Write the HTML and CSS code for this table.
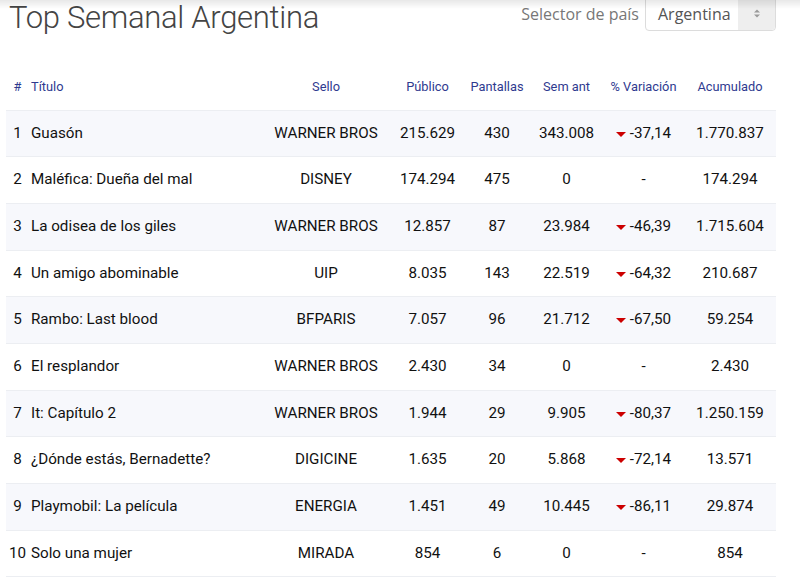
FILE: index.html
```html
<!DOCTYPE html>
<html lang="es">
<head>
<meta charset="utf-8">
<title>Top Semanal Argentina</title>
<link rel="stylesheet" href="styles.css">
</head>
<body>
<div class="topshadow"></div>
<div class="page">
  <div class="head">
    <h1 class="title">Top Semanal Argentina</h1>
    <div class="selector">
      <span class="sel-label">Selector de país</span>
      <div class="sel-box">
        <span class="sel-value">Argentina</span>
        <span class="sel-btn">
          <svg width="8" height="11" viewBox="0 0 8 11"><path d="M1 4.5 L4 1.5 L7 4.5 Z M1 6.5 L4 9.5 L7 6.5 Z" fill="#9a9a9a"/></svg>
        </span>
      </div>
    </div>
  </div>
  <table class="top">
    <colgroup>
      <col class="c-n"><col class="c-t"><col class="c-s"><col class="c-p"><col class="c-pa"><col class="c-sa"><col class="c-v"><col class="c-a">
    </colgroup>
    <thead>
      <tr><th>#</th><th class="l">Título</th><th>Sello</th><th>Público</th><th>Pantallas</th><th>Sem ant</th><th>% Variación</th><th>Acumulado</th></tr>
    </thead>
    <tbody>
      <tr><td>1</td><td class="l">Guasón</td><td>WARNER BROS</td><td>215.629</td><td>430</td><td>343.008</td><td><span class="down"></span>-37,14</td><td>1.770.837</td></tr>
      <tr><td>2</td><td class="l">Maléfica: Dueña del mal</td><td>DISNEY</td><td>174.294</td><td>475</td><td>0</td><td>-</td><td>174.294</td></tr>
      <tr><td>3</td><td class="l">La odisea de los giles</td><td>WARNER BROS</td><td>12.857</td><td>87</td><td>23.984</td><td><span class="down"></span>-46,39</td><td>1.715.604</td></tr>
      <tr><td>4</td><td class="l">Un amigo abominable</td><td>UIP</td><td>8.035</td><td>143</td><td>22.519</td><td><span class="down"></span>-64,32</td><td>210.687</td></tr>
      <tr><td>5</td><td class="l">Rambo: Last blood</td><td>BFPARIS</td><td>7.057</td><td>96</td><td>21.712</td><td><span class="down"></span>-67,50</td><td>59.254</td></tr>
      <tr><td>6</td><td class="l">El resplandor</td><td>WARNER BROS</td><td>2.430</td><td>34</td><td>0</td><td>-</td><td>2.430</td></tr>
      <tr><td>7</td><td class="l">It: Capítulo 2</td><td>WARNER BROS</td><td>1.944</td><td>29</td><td>9.905</td><td><span class="down"></span>-80,37</td><td>1.250.159</td></tr>
      <tr><td>8</td><td class="l">¿Dónde estás, Bernadette?</td><td>DIGICINE</td><td>1.635</td><td>20</td><td>5.868</td><td><span class="down"></span>-72,14</td><td>13.571</td></tr>
      <tr><td>9</td><td class="l">Playmobil: La película</td><td>ENERGIA</td><td>1.451</td><td>49</td><td>10.445</td><td><span class="down"></span>-86,11</td><td>29.874</td></tr>
      <tr><td>10</td><td class="l">Solo una mujer</td><td>MIRADA</td><td>854</td><td>6</td><td>0</td><td>-</td><td>854</td></tr>
    </tbody>
  </table>
</div>
</body>
</html>
```

FILE: styles.css
```css
html, body {
  margin: 0;
  padding: 0;
  background: #fff;
  overflow: hidden;
}
body {
  font-family: Roboto, "Liberation Sans", sans-serif;
  color: #111;
}
.topshadow {
  position: fixed;
  top: 0;
  left: 0;
  right: 0;
  height: 9px;
  background: linear-gradient(rgba(0,0,0,0.09), rgba(0,0,0,0));
  z-index: 5;
  pointer-events: none;
}
.page {
  padding: 0 24px 0 6px;
}
.head {
  display: flex;
  justify-content: space-between;
  align-items: flex-start;
  height: 64px;
}
.title {
  margin: 0 0 0 3px;
  font-family: Roboto, sans-serif;
  font-weight: 300;
  font-size: 31px;
  letter-spacing: -0.3px;
  line-height: 36.5px;
  color: #444;
}
.selector {
  display: flex;
  align-items: center;
  font-family: "Open Sans", sans-serif;
  font-size: 16px;
  margin-top: -4px;
}
.sel-label {
  color: #777;
  margin-right: 6px;
}
.sel-box {
  display: flex;
  align-items: stretch;
  height: 35px;
  border: 1px solid #dcdcdc;
  border-radius: 0 0 4px 4px;
  background: #fff;
  box-sizing: border-box;
  width: 131px;
}
.sel-value {
  color: #555;
  padding: 0 0 0 12px;
  flex: 1;
  display: flex;
  align-items: center;
}
.sel-btn {
  width: 37px;
  background: #eee;
  display: flex;
  align-items: center;
  justify-content: center;
  border-radius: 0 0 4px 0;
}
table.top {
  border-collapse: collapse;
  table-layout: fixed;
  width: 770px;
}
.c-n { width: 23px; }
.c-t { width: 232px; }
.c-s { width: 130px; }
.c-p { width: 73px; }
.c-pa { width: 66px; }
.c-sa { width: 73px; }
.c-v { width: 81px; }
.c-a { width: 92px; }
th, td {
  text-align: center;
  padding: 12px 0;
  white-space: nowrap;
}
th {
  font-weight: 400;
  font-size: 12.8px;
  line-height: 21.67px;
  color: #2f3a8f;
}
td {
  font-size: 15.2px;
  line-height: 21.67px;
  border-top: 1px solid #eceef2;
}
th.l, td.l {
  text-align: left;
  padding-left: 2px;
}
tbody tr:nth-child(odd) td {
  background: #f7f8fc;
}
tbody tr:last-child td {
  border-bottom: 1px solid #eceef2;
}
.down {
  display: inline-block;
  width: 0;
  height: 0;
  border-left: 5px solid transparent;
  border-right: 5px solid transparent;
  border-top: 5px solid #c00;
  margin-right: 4px;
  vertical-align: 1px;
}
```
